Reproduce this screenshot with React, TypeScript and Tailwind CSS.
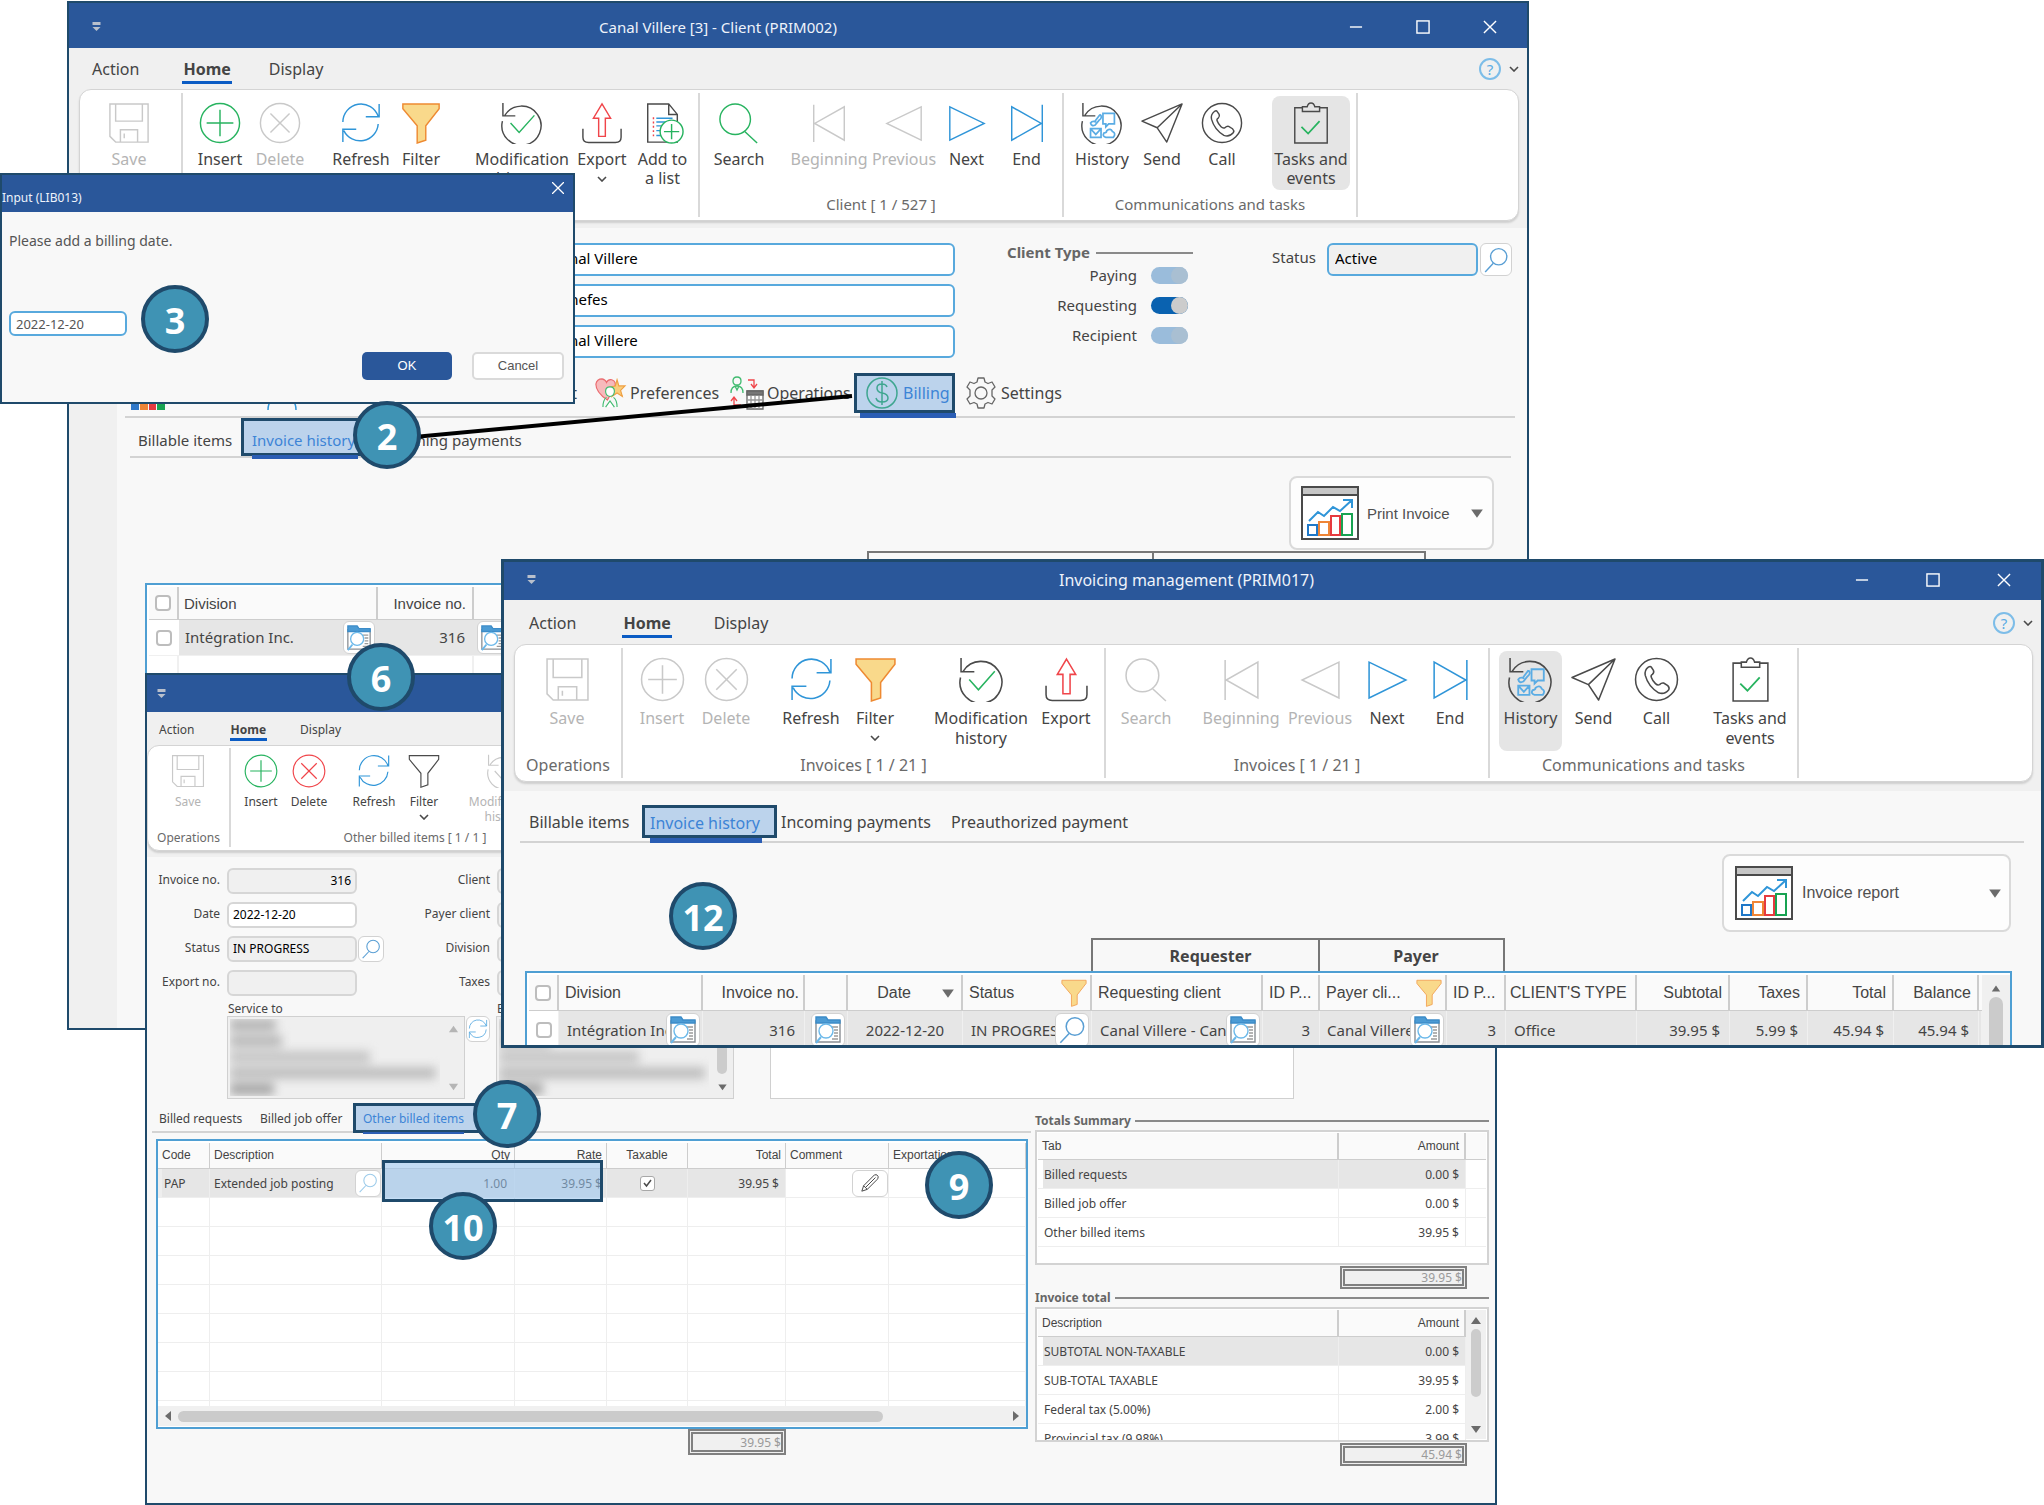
import React from "react";

type Size = "sm" | "md" | "lg";

const GREY = "#c9c9c9";
const INK = "#4a4a4a";
const GREEN = "#27b35f";
const BLUE = "#2f95d8";
const RED = "#f0454a";

/* ---------- icons ---------- */

function Svg({ children, className, color = INK, box = "0 0 44 44", weight = 1.5 }: { children: React.ReactNode; className?: string; color?: string; box?: string; weight?: number }) {
  return (
    <svg viewBox={box} className={className} fill="none" stroke={color} strokeWidth={weight} aria-hidden="true">
      {children}
    </svg>
  );
}

type IconProps = { className?: string; color?: string };

const SaveIcon = ({ className, color = GREY }: IconProps) => (
  <Svg className={className} color={color}>
    <path d="M2 2H42V42H8L2 36ZM8 2V20H36V2M13 42V29H31V42M17 33V38" />
  </Svg>
);
const PlusIcon = ({ className, color = GREEN }: IconProps) => (
  <Svg className={className} color={color}>
    <circle cx="22" cy="22" r="20.5" />
    <path d="M22 8V36M8 22H36" />
  </Svg>
);
const CrossIcon = ({ className, color = GREY }: IconProps) => (
  <Svg className={className} color={color}>
    <circle cx="22" cy="22" r="20.5" />
    <path d="M12 12L32 32M32 12L12 32" />
  </Svg>
);
const RefreshIcon = ({ className, color = BLUE }: IconProps) => (
  <Svg className={className} color={color}>
    <path d="M3 21A19 19 0 0 1 40 15M41 2V15.500H27M40 23A19 19 0 0 1 4 30M3 42V28.500H17" />
  </Svg>
);
const FilterIcon = ({ className, color = "#ee8a32", fill = "#f9d98b" }: IconProps & { fill?: string }) => (
  <Svg className={className} color={color}>
    <path fill={fill} d="M3 2H41V7L27 25V40L18 43V25L3 7Z" />
  </Svg>
);
const RewindCheckIcon = ({ className, color = INK, check = GREEN }: IconProps & { check?: string }) => (
  <Svg className={className} color={color}>
    <path d="M4 14A20.500 20.500 0 1 1 1.500 20M2 1V14.500H15" />
    <path stroke={check} d="M10 22L19 32L35 14" />
  </Svg>
);
const ExportIcon = ({ className }: IconProps) => (
  <Svg className={className}>
    <path stroke={RED} d="M22 2L31 17H25.500V36H18.500V17H13Z" />
    <path d="M2 28V37Q2 42.500 8 42.500H36Q42 42.500 42 37V28" />
  </Svg>
);
const AddListIcon = ({ className }: IconProps) => (
  <Svg className={className}>
    <path d="M6 2H28L37 13V42H6ZM28 2V13H37" />
    <path stroke={BLUE} d="M15 17H32M15 21H28M15 25H24M15 30H22M15 35H22" />
    <path stroke={RED} strokeDasharray="2 2.500" d="M12 16V37" />
    <circle cx="31" cy="31" r="12" fill="#fff" stroke={GREEN} />
    <path stroke={GREEN} d="M31 23V39M23 31H39" />
  </Svg>
);
const SearchIcon = ({ className, color = GREEN }: IconProps) => (
  <Svg className={className} color={color}>
    <circle cx="18" cy="18" r="16" />
    <path d="M28 31L41 43" />
  </Svg>
);
const FirstIcon = ({ className, color = GREY }: IconProps) => (
  <Svg className={className} color={color}>
    <path d="M6 3V42M38 5V40L7 22.500Z" />
  </Svg>
);
const PrevIcon = ({ className, color = GREY }: IconProps) => (
  <Svg className={className} color={color}>
    <path d="M40 5V40L4 22.500Z" />
  </Svg>
);
const NextIcon = ({ className, color = BLUE }: IconProps) => (
  <Svg className={className} color={color}>
    <path d="M4 5V40L40 22.500Z" />
  </Svg>
);
const EndIcon = ({ className, color = BLUE }: IconProps) => (
  <Svg className={className} color={color}>
    <path d="M38 3V42M6 5V40L37 22.500Z" />
  </Svg>
);
const HistoryIcon = ({ className }: IconProps) => (
  <Svg className={className}>
    <path d="M4 14A20.500 20.500 0 1 1 1.500 20M2 1V14.500H15" />
    <g stroke="#5aace4" strokeWidth="1.800">
      <path d="M23 12H35V23H29L26 26V23H23ZM10 28H21V37H10ZM10 28L15.500 34L21 28" />
      <path d="M26 37Q22 36 24 32.500Q27 32 27 30Q31 27 33 31Q37 33 34 37ZM20 13L14 21M20 13Q23 16 19 19L15 24Q11 26 10 22Q12 19 16 21" />
    </g>
  </Svg>
);
const SendIcon = ({ className }: IconProps) => (
  <Svg className={className}>
    <path strokeLinejoin="round" d="M43 2L1 20L17 27ZM43 2L27 42L17 27Z" />
  </Svg>
);
const CallIcon = ({ className }: IconProps) => (
  <Svg className={className}>
    <circle cx="22" cy="22" r="20.500" />
    <path d="M14 10Q10 13 11 18Q14 29 24 35Q30 37 34 32Q35 30 33 28L29 25.500Q27 25 25 27Q23 28 21 26Q18 23 17 20Q16 18 18 17Q20 15 19 13L17 10Q16 8.500 14 10Z" />
  </Svg>
);
const TasksIcon = ({ className }: IconProps) => (
  <Svg className={className}>
    <path d="M13 6H5V43H39V6H31M13 5H18Q19 1 22 1Q25 1 26 5H31V10H13Z" />
    <path stroke={GREEN} strokeWidth="1.800" d="M12 26L19 33L31 20" />
  </Svg>
);
const ChartIcon = ({ className }: IconProps) => (
  <Svg className={className} box="0 0 58 54" weight={2}>
    <rect x="1" y="1" width="56" height="52" fill="#fff" />
    <rect x="1" y="1" width="56" height="8" fill="#c6c6c6" />
    <path stroke={BLUE} d="M8 35L17 26L23 30L32 21L39 25L51 14M42 14H51V22" />
    <rect x="7" y="39" width="9" height="10" stroke="#1f78c8" />
    <rect x="18" y="36" width="10" height="13" stroke="#ef8536" />
    <rect x="30" y="30" width="9" height="19" stroke="#e63a3f" />
    <rect x="41" y="28" width="10" height="21" stroke="#18a352" />
  </Svg>
);
const FolderSearchIcon = ({ className }: IconProps) => (
  <Svg className={className} box="0 0 28 28" weight={1.400}>
    <path fill="#fff" stroke="#8a8f94" d="M2 5H26V26H2Z" />
    <path fill="#4c9bd4" stroke="#3c8cc8" d="M2 1H12L14 4H26V7H2Z" />
    <path stroke="#9a9a9a" d="M18 11H24M20 14H24M20 17H24M20 20H24M18 23H24" />
    <circle cx="12" cy="15" r="7" fill="#fff" stroke="#6cb9ea" />
    <path stroke="#6cb9ea" strokeWidth="2" d="M7 21L2 27" />
  </Svg>
);
const LensIcon = ({ className, color = "#5a9fd4" }: IconProps) => (
  <Svg className={className} box="0 0 24 24" color={color} weight={1.300}>
    <circle cx="14.500" cy="9" r="7.500" />
    <path d="M9.500 15L2 23" />
  </Svg>
);
const PencilIcon = ({ className }: IconProps) => (
  <Svg className={className} box="0 0 22 22" weight={1.100}>
    <path d="M2 20L4 14L16 2Q19 1 20 4Q20 6 19 7L8 18ZM4 14L8 18M6 16L17 5" />
  </Svg>
);
const HeartIcon = ({ className }: IconProps) => (
  <Svg className={className} box="0 0 34 34" weight={1.300}>
    <path fill="#f7b9bb" stroke="#ea6a6e" d="M14 25Q1 16 1 7Q2 1 8 1Q12 2 13 5Q15 1 19 2Q25 4 22 11Z" />
    <path fill="#f9cd7c" stroke="#efa042" d="M25 2L27 9L34 9L29 14L31 21L25 17L19 21L20 14L17 10L23 9Z" />
    <path fill="#fff" stroke="#41bb70" d="M17 10Q22 10 22 15Q22 20 17 21Q12 20 12 15Q12 10 17 10ZM9 33Q9 25 13 22M25 33Q25 25 21 22M12 33L17 26L22 33" />
  </Svg>
);
const OperationsIcon = ({ className }: IconProps) => (
  <Svg className={className} box="0 0 34 34" weight={1.300}>
    <path stroke="#41bb70" d="M7 1Q11 1 11 5Q11 9 7 9Q3 9 3 5Q3 1 7 1ZM1 17Q1 10 7 10Q13 10 13 17M5 10L7 14L9 10" />
    <path stroke={RED} d="M18 4H24V11M21 8L24 12L27 8M4 22V29H11M1 25L4 21L7 25" />
    <path fill="#fff" stroke="#666" d="M17 15H33V33H17Z" />
    <path fill="#777" stroke="#666" d="M17 15H33V19H17Z" />
    <path stroke="#999" d="M17 24H33M17 28H33M21 20V33M25 20V33M29 20V33" />
  </Svg>
);
const DollarIcon = ({ className }: IconProps) => (
  <Svg className={className} box="0 0 32 32" color="#3fa690" weight={1.500}>
    <circle cx="16" cy="16" r="15" />
    <path d="M16 4V28M21 10Q20 7 16 7Q11 7 11 11Q11 15 16 16Q22 17 22 21Q22 25 16 25Q11 25 10 21" />
  </Svg>
);
const GearIcon = ({ className }: IconProps) => (
  <Svg className={className} box="0 0 32 32" color="#666" weight={1.300}>
    <path strokeLinejoin="round" d="M13 1H19L20 5L23 6.500L27 5L30 10L27 13V19L30 22L27 27L23 25.500L20 27L19 31H13L12 27L9 25.500L5 27L2 22L5 19V13L2 10L5 5L9 6.500L12 5Z" />
    <circle cx="16" cy="16" r="6" />
  </Svg>
);
const Tri = ({ dir, className = "size-3", color = "#6b6b6b" }: { dir: "up" | "down" | "left" | "right"; className?: string; color?: string }) => {
  const d = { up: "M1 10H11L6 3Z", down: "M1 3H11L6 10Z", left: "M9 1V11L3 6Z", right: "M3 1V11L9 6Z" }[dir];
  return (
    <svg viewBox="0 0 12 12" className={className} aria-hidden="true">
      <path d={d} fill={color} />
    </svg>
  );
};
const Chevron = ({ className = "w-[10px] h-[6px]" }: { className?: string }) => (
  <Svg className={className} box="0 0 10 6" weight={1.600}>
    <path d="M1 1L5 5L9 1" />
  </Svg>
);

/* ---------- window chrome ---------- */

function TitleBar({ title, className, titleClass = "", button }: { title: string; className: string; titleClass?: string; button?: string }) {
  return (
    <header className={"relative flex shrink-0 items-center justify-between bg-[#2a579a] text-[#eef3fa] " + className}>
      <svg viewBox="0 0 8 10" className="h-[10px] w-[9px]" aria-hidden="true">
        <path d="M0 0H8V3H0Z" fill="#b9c0cc" />
        <path d="M0 5H8L4 9Z" fill="#b9c0cc" />
      </svg>
      {title && <h1 className={"absolute inset-x-0 text-center " + titleClass}>{title}</h1>}
      {button && (
        <div className="relative flex items-center">
          <button aria-label="Minimize" className={"flex justify-center " + button}>
            <Svg className="size-[14px]" box="0 0 15 15" color="#fff"><path d="M1 7.500H14" /></Svg>
          </button>
          <button aria-label="Maximize" className={"flex justify-center " + button}>
            <Svg className="size-[14px]" box="0 0 15 15" color="#fff"><rect x="1" y="1" width="13" height="13" /></Svg>
          </button>
          <button aria-label="Close" className={"flex justify-center " + button}>
            <Svg className="size-[14px]" box="0 0 15 15" color="#fff"><path d="M1 1L14 14M14 1L1 14" /></Svg>
          </button>
        </div>
      )}
    </header>
  );
}

function MenuBar({ className, home, display, underline, help }: { className: string; home: string; display: string; underline: string; help: boolean }) {
  return (
    <nav className={"relative flex shrink-0 items-center " + className}>
      <div className="flex">
        <button>Action</button>
        <button className={"relative font-bold " + home}>
          Home
          <span className={"absolute -inset-x-px h-[3px] bg-[#0b5cc4] " + underline} />
        </button>
        <button className={display}>Display</button>
      </div>
      {help && (
        <div className="absolute right-2 flex items-center gap-2">
          <button aria-label="Help" className="flex size-[22px] items-center justify-center rounded-full border-2 border-[#7dbde8] text-[15px] leading-none text-[#5aace4]">?</button>
          <Chevron />
        </div>
      )}
    </nav>
  );
}

type Tool = { label: React.ReactNode; icon: React.ReactNode; box: string; off?: boolean; active?: boolean; more?: boolean };

const SIZES: Record<Size, { item: string; icon: string; group: string; caption: string; more: string }> = {
  md: { item: "h-[94px] pt-[6px] gap-[6px]", icon: "size-[42px]", group: "pt-[3px] my-[3px] h-[124px]", caption: "mt-[5px] text-[15px]", more: "flex h-[19px] items-center justify-center" },
  lg: { item: "h-[100px] pt-[6px] gap-[6px]", icon: "size-[45px]", group: "pt-[3px] my-[3px] h-[130px]", caption: "mt-1", more: "flex h-5 items-center justify-center" },
  sm: { item: "h-[78px] pt-1 gap-[6px]", icon: "size-[34px]", group: "pt-[2px] my-[2px] h-[99px]", caption: "mt-[2px]", more: "flex h-[15px] items-center justify-center" },
};

function Group({ size, caption, tools, className, inset }: { size: Size; caption: string; tools: Tool[]; className: string; inset: string }) {
  const s = SIZES[size];
  return (
    <section className={"shrink-0 border-r-2 border-[#d9d9d9] " + s.group + " " + className}>
      <div className={"flex " + inset}>
        {tools.map((t, i) => (
          <button key={i} disabled={t.off} className={"flex shrink-0 flex-col items-center rounded-lg " + s.item + " " + t.box + (t.off ? " text-[#b4b4b4]" : "") + (t.active ? " bg-[#e5e5e5]" : "")}>
            <span className={"block " + s.icon}>{t.icon}</span>
            <span className="text-center whitespace-nowrap">
              {t.label}
              {t.more && <span className={s.more}><Chevron /></span>}
            </span>
          </button>
        ))}
      </div>
      <p className={"text-center whitespace-nowrap text-[#6a6a6a] " + s.caption}>{caption}</p>
    </section>
  );
}

const full = "size-full";
const modification = <>Modification<br />history</>;
const tasks = <>Tasks and<br />events</>;

/* ---------- small controls ---------- */

function IconButton({ label, className, children }: { label: string; className: string; children: React.ReactNode }) {
  return (
    <button aria-label={label} className={"flex shrink-0 items-center justify-center rounded-md border border-[#d2d2d2] bg-white " + className}>
      {children}
    </button>
  );
}

function Toggle({ label, strong, defaultChecked }: { label: string; strong?: boolean; defaultChecked?: boolean }) {
  return (
    <label className="flex h-[30px] items-center justify-end gap-[14px]">
      {label}
      <span className={"relative flex h-[17px] w-[37px] justify-end rounded-full " + (strong ? "bg-[#0a62b0]" : "bg-[#9abcdb]")}>
        <input type="checkbox" defaultChecked={defaultChecked} className="absolute inset-0 appearance-none" />
        <span className={"size-[17px] rounded-full " + (strong ? "bg-[#cccccc]" : "bg-[#a9bfd2]")} />
      </span>
    </label>
  );
}

function CheckBox({ label }: { label: string }) {
  return <input type="checkbox" aria-label={label} className="mx-auto block size-[16px] appearance-none rounded-[4px] border-2 border-[#bdbdbd] bg-white" />;
}

function Badge({ n, className }: { n: number; className: string }) {
  return (
    <span className={"absolute flex size-[68px] items-center justify-center rounded-full border-4 border-[#1f4a6b] bg-[#3f93b4] pt-1 font-['Open_Sans',sans-serif] text-[36px] leading-none font-bold text-white " + className}>
      {n}
    </span>
  );
}

function ReportButton({ label, className }: { label: string; className: string }) {
  return (
    <button className={"flex items-center rounded-lg border-2 border-[#dadada] bg-[#fdfdfd] font-['Liberation_Sans',sans-serif] text-[#505050] " + className}>
      <ChartIcon className="h-[54px] w-[58px]" />
      <span className="flex-1 text-left whitespace-nowrap">{label}</span>
      <Tri dir="down" className="size-[14px]" />
    </button>
  );
}

/* ---------- client window ---------- */

function ClientWindow() {
  const field = "h-[33px] w-[415px] rounded-md border-2 border-[#58a9dd] bg-white px-[9px] pb-1 text-[15px] text-black";
  return (
    <section className="absolute top-px left-[67px] flex h-[1029px] w-[1462px] flex-col overflow-hidden border-2 border-[#1f4a6b] bg-[#f8f8f8] text-[16px] leading-[19px] text-[#444]">
      <TitleBar title="Canal Villere [3] - Client (PRIM002)" button="w-[67px]" titleClass="pr-[160px] text-[15px]" className="h-[45px] pt-[3px] pr-1 pl-[23px]" />
      <div className="bg-[#f0f0f0] pb-[7px]">
        <MenuBar className="h-[41px] pt-px pl-[23px]" home="ml-11" display="ml-[38px]" underline="-bottom-[5px]" help />
        <div className="mr-2 ml-[10px] flex h-[132px] rounded-xl border border-[#d4d4d4] bg-white shadow-[0_2px_2px_#cfcfcf]">
          <Group size="md" caption="Operations" className="w-[103px]" inset="pl-[19px]" tools={[{ label: "Save", icon: <SaveIcon className={full} />, box: "w-[60px]", off: true }]} />
          <Group
            size="md"
            caption=""
            className="w-[517px]"
            inset="pl-[7px]"
            tools={[
              { label: "Insert", icon: <PlusIcon className={full} />, box: "w-[60px]" },
              { label: "Delete", icon: <CrossIcon className={full} />, box: "w-[60px]", off: true },
              { label: "Refresh", icon: <RefreshIcon className={full} />, box: "ml-[21px] w-[60px]" },
              { label: "Filter", icon: <FilterIcon className={full} />, box: "w-[60px]" },
              { label: modification, icon: <RewindCheckIcon className={full} />, box: "ml-[21px] w-[100px]" },
              { label: "Export", icon: <ExportIcon className={full} />, box: "w-[60px]", more: true },
              { label: <>Add to<br />a list</>, icon: <AddListIcon className={full} />, box: "w-[61px]" },
            ]}
          />
          <Group
            size="md"
            caption="Client [ 1 / 527 ]"
            className="w-[364px]"
            inset="pl-[9px]"
            tools={[
              { label: "Search", icon: <SearchIcon className={full} />, box: "w-[60px]" },
              { label: "Beginning", icon: <FirstIcon className={full} />, box: "ml-5 w-[80px]", off: true },
              { label: "Previous", icon: <PrevIcon className={full} />, box: "w-[70px]", off: true },
              { label: "Next", icon: <NextIcon className={full} />, box: "w-[55px]" },
              { label: "End", icon: <EndIcon className={full} />, box: "w-[65px]" },
            ]}
          />
          <Group
            size="md"
            caption="Communications and tasks"
            className="w-[294px]"
            inset="pl-[8px]"
            tools={[
              { label: "History", icon: <HistoryIcon className={full} />, box: "w-[60px]" },
              { label: "Send", icon: <SendIcon className={full} />, box: "w-[60px]" },
              { label: "Call", icon: <CallIcon className={full} />, box: "w-[60px]" },
              { label: tasks, icon: <TasksIcon className={full} />, box: "ml-5 w-[78px]", active: true },
            ]}
          />
        </div>
      </div>
      <div className="flex min-h-0 flex-1">
        <div className="w-12 shrink-0 bg-[#f0f0f0]" />
        <div className="flex min-w-0 flex-1 flex-col">
          <div className="flex h-[144px] shrink-0 pt-[15px] pl-[423px] text-[15px]">
            <div className="flex flex-col gap-2">
              <input aria-label="Name" className={field} defaultValue="Canal Villere" />
              <input aria-label="Short name" className={field} defaultValue="Benefes" />
              <input aria-label="Legal name" className={field} defaultValue="Canal Villere" />
            </div>
            <fieldset className="ml-[52px] w-[186px]">
              <legend className="flex w-[186px] items-center gap-[6px] font-bold whitespace-nowrap text-[#666]">
                Client Type <span className="h-[2px] flex-1 bg-[#8a8a8a]" />
              </legend>
              <div className="-mt-[2px] w-[181px]">
                <Toggle label="Paying" />
                <Toggle label="Requesting" strong defaultChecked />
                <Toggle label="Recipient" />
              </div>
            </fieldset>
            <div className="ml-[79px] flex h-[33px]">
              <label className="flex items-center gap-[11px]">
                <span className="pb-1">Status</span>
                <input className="h-[33px] w-[151px] rounded-md border-2 border-[#58a9dd] bg-[#f0f0f0] px-[6px] pb-1 text-black" defaultValue="Active" />
              </label>
              <IconButton label="Find status" className="ml-[2px] h-[33px] w-8">
                <LensIcon className="size-[26px]" />
              </IconButton>
            </div>
          </div>
          <nav className="mr-3 ml-2 flex h-[46px] shrink-0 border-b-2 border-[#d3d3d3] pb-[2px]">
            <button className="flex w-[136px] items-end pb-1 pl-[6px]">
              <svg viewBox="0 0 34 30" className="h-[30px] w-[34px]" aria-hidden="true">
                <path d="M0 20H8V30H0Z" fill="#2f78c8" />
                <path d="M9 14H17V30H9Z" fill="#ef8536" />
                <path d="M18 9H25V30H18Z" fill="#e63a3f" />
                <path d="M26 4H34V30H26Z" fill="#18a352" />
              </svg>
            </button>
            <button className="flex w-[100px] items-end pb-1 pl-[6px]">
              <Svg className="size-[30px]" box="0 0 30 30" color={BLUE}><circle cx="15" cy="8" r="7" /><path d="M1 30Q1 17 15 17Q29 17 29 30" /></Svg>
            </button>
            <button className="flex w-[216px] items-center justify-end text-right">Contact</button>
            <button className="ml-4 flex w-[137px] items-center gap-[3px]">
              <HeartIcon className="h-[30px] w-[34px]" />
              Preferences
            </button>
            <button className="flex w-[124px] items-center gap-[3px]">
              <OperationsIcon className="size-[34px]" />
              Operations
            </button>
            <button className="relative mt-px flex h-10 w-[101px] items-center gap-[5px] border-[3px] border-[#1f4a6b] bg-[#bcd3ec] pl-[9px] text-[#3c84d6]">
              <DollarIcon className="size-8" />
              Billing
              <span className="absolute -right-1 -bottom-2 left-[3px] h-[5px] bg-[#2a5db4]" />
            </button>
            <button className="ml-[10px] flex items-center gap-1">
              <GearIcon className="size-8" />
              Settings
            </button>
          </nav>
          <nav className="mr-4 ml-[13px] flex h-10 shrink-0 border-b-2 border-[#d3d3d3] text-[15px]">
            <button className="ml-2 w-[103px] pt-[6px] text-left">Billable items</button>
            <button className="relative flex h-[38px] w-[124px] items-center border-[3px] border-[#1f4a6b] bg-[#bcd3ec] pt-[6px] pl-2 whitespace-nowrap text-[#3c84d6]">
              Invoice history
              <span className="absolute -bottom-[6px] left-2 h-[4px] w-[106px] bg-[#2a5db4]" />
            </button>
            <button className="ml-4 pt-[6px]">Incoming payments</button>
          </nav>
          <div className="mt-[18px] mr-[33px] flex shrink-0 justify-end">
            <ReportButton label="Print Invoice" className="h-[74px] w-[205px] gap-2 pr-2 pl-[10px] text-[15px]" />
          </div>
          <div className="mt-px ml-[750px] flex h-8 w-[559px] shrink-0 border-2 border-[#777]">
            <span className="w-[285px] border-r-2 border-[#777]" />
          </div>
          <div className="ml-7 h-[300px] w-[1370px] shrink-0 border-2 border-[#4f9fd3] bg-white pt-[2px] pl-[2px]">
            <table className="w-full table-fixed border-separate border-spacing-0">
              <colgroup>
                <col className="w-[30px]" />
                <col className="w-[199px]" />
                <col className="w-[96px]" />
                <col className="w-[40px]" />
                <col />
              </colgroup>
              <thead className="font-['Liberation_Sans',sans-serif] text-[15px]">
                <tr className="h-[33px] bg-[#fafafa] text-left *:border-r-2 *:border-b *:border-[#cdcdcd] *:font-normal">
                  <th><CheckBox label="Select all" /></th>
                  <th className="pl-[5px]">Division</th>
                  <th className="pr-[6px] text-right">Invoice no.</th>
                  <th />
                  <th />
                </tr>
              </thead>
              <tbody className="text-[15px]">
                <tr className="h-[35px] bg-[#e6e6e6]">
                  <td className="bg-white"><CheckBox label="Select Intégration Inc." /></td>
                  <td className="pl-[6px]">
                    <div className="flex items-center justify-between">
                      Intégration Inc.
                      <IconButton label="Open division" className="mr-[3px] h-[33px] w-8"><FolderSearchIcon className="size-[26px]" /></IconButton>
                    </div>
                  </td>
                  <td className="pr-[9px] text-right">316</td>
                  <td className="pl-[3px]"><IconButton label="Open invoice" className="h-[33px] w-8"><FolderSearchIcon className="size-[26px]" /></IconButton></td>
                  <td />
                </tr>
                <tr className="h-9 *:border-t *:border-r-2 *:border-[#f0f0f0]">
                  <td /><td /><td /><td /><td />
                </tr>
              </tbody>
            </table>
          </div>
        </div>
      </div>
    </section>
  );
}

/* ---------- invoice window ---------- */

function FieldRow({ label, value, grey, right, labelClass = "w-[73px]", children }: { label: string; value?: string; grey?: boolean; right?: boolean; labelClass?: string; children?: React.ReactNode }) {
  return (
    <div className="flex h-[26px] items-center">
      <label className="flex items-center gap-[7px]">
        <span className={"pb-[3px] text-right whitespace-nowrap " + labelClass}>{label}</span>
        <input defaultValue={value} className={"h-[26px] w-[130px] rounded-md border-2 border-[#d6d6d6] px-1 pb-[2px] text-[12px] text-black " + (grey ? "bg-[#f0f0f0] " : "bg-white ") + (right ? "text-right" : "")} />
      </label>
      {children}
    </div>
  );
}

function BlurredList({ dim }: { dim?: boolean }) {
  return (
    <div className="flex h-[83px] w-[238px] shrink-0 justify-between border border-[#d0d0d0] bg-[#efefef] p-[2px]">
      <div className="w-[210px] overflow-hidden">
        <div className="flex flex-col gap-1 blur-[5px]">
          <span className="h-3 w-[46px] bg-[#b5b5b5]" />
          <span className="h-3 w-[52px] bg-[#bababa]" />
          <span className="h-3 w-[140px] bg-[#c6c6c6]" />
          <span className="h-3 w-[206px] bg-[#bfbfbf]" />
          <span className="h-3 w-[44px] bg-[#a8a8a8]" />
        </div>
      </div>
      <div className="flex w-[18px] flex-col items-center justify-between py-1">
        <Tri dir="up" className="size-[11px]" color={dim ? "#b5b5b5" : "#6b6b6b"} />
        {!dim && <span className="mt-auto mb-2 h-[45px] w-[10px] rounded-full bg-[#cccccc]" />}
        <Tri dir="down" className="size-[11px]" color={dim ? "#b5b5b5" : "#6b6b6b"} />
      </div>
    </div>
  );
}

function SumBox({ value, label, className }: { value: string; label: string; className: string }) {
  return (
    <output aria-label={label} className={"flex items-center justify-end border-[5px] border-double border-[#808080] bg-[#f0f0f0] text-[12px] leading-[13px] text-[#9a9a9a] " + className}>
      {value}
    </output>
  );
}

function SummaryTable({ title, first, rows, total, scroll }: { title: string; first: string; rows: [string, string][]; total: string; scroll?: boolean }) {
  return (
    <section>
      <h2 className="flex h-[17px] items-center gap-1 text-[12px] font-bold whitespace-nowrap text-[#666]">
        {title}
        <span className="h-[2px] flex-1 bg-[#8a8a8a]" />
      </h2>
      <div className="mt-px flex h-[135px] overflow-hidden border-2 border-[#d3d3d3] bg-white p-px">
        <table className="h-fit w-full table-fixed border-separate border-spacing-0 text-[12px]">
          <colgroup>
            <col className="w-[5px]" />
            <col />
            <col className="w-[127px]" />
            {!scroll && <col className="w-5" />}
          </colgroup>
          <thead className="font-['Liberation_Sans',sans-serif] text-[12px]">
            <tr className="h-[27px] bg-[#fafafa] *:border-b *:border-[#cdcdcd] *:font-normal">
              <th colSpan={2} className="border-r-2 pl-1 text-left">{first}</th>
              <th className="border-r-2 pr-[5px] text-right">Amount</th>
              {!scroll && <th />}
            </tr>
          </thead>
          <tbody>
            {rows.map(([name, amount], i) => (
              <tr key={name} className={"h-[29px] *:border-b *:border-[#eeeeee] " + (i === 0 ? "bg-[#e6e6e6]" : "")}>
                <td className="bg-white" />
                <td className="border-r pl-px">{name}</td>
                <td className="border-r pr-[6px] text-right">{amount}</td>
                {!scroll && <td className="bg-white" />}
              </tr>
            ))}
          </tbody>
        </table>
        {scroll && (
          <div className="flex w-5 shrink-0 flex-col items-center bg-[#f0f0f0] py-1">
            <Tri dir="up" />
            <span className="mt-[3px] h-[68px] w-[10px] rounded-full bg-[#cccccc]" />
            <Tri dir="down" className="mt-auto size-3" />
          </div>
        )}
      </div>
      <div className="flex justify-end pr-[22px]">
        <SumBox label={title} value={total} className="mt-px h-[23px] w-[127px]" />
      </div>
    </section>
  );
}

function InvoiceWindow() {
  return (
    <section className="absolute top-[673px] left-[145px] flex h-[832px] w-[1352px] flex-col overflow-hidden border-2 border-[#1f4a6b] bg-[#f8f8f8] text-[12px] leading-[15px] text-[#444]">
      <TitleBar title="" className="h-[37px] pl-[10px]" />
      <div className="bg-[#f0f0f0] pb-[6px]">
        <MenuBar className="h-[33px] pt-px pl-3" home="ml-[36px]" display="ml-[34px]" underline="-bottom-1" help={false} />
        <div className="flex h-[106px] overflow-hidden rounded-xl border border-[#d4d4d4] bg-white shadow-[0_2px_2px_#cfcfcf]">
          <Group size="sm" caption="Operations" className="w-[83px]" inset="pl-[15px]" tools={[{ label: "Save", icon: <SaveIcon className={full} />, box: "w-[50px]", off: true }]} />
          <Group
            size="sm"
            caption="Other billed items [ 1 / 1 ]"
            className="w-[370px]"
            inset="pl-[6px]"
            tools={[
              { label: "Insert", icon: <PlusIcon className={full} />, box: "w-[48px]" },
              { label: "Delete", icon: <CrossIcon className={full} color={RED} />, box: "w-[48px]" },
              { label: "Refresh", icon: <RefreshIcon className={full} />, box: "ml-4 w-[50px]" },
              { label: "Filter", icon: <FilterIcon className={full} color={INK} fill="#fff" />, box: "w-[50px]", more: true },
              { label: modification, icon: <RewindCheckIcon className={full} color={GREY} check={GREY} />, box: "ml-3 w-[86px]", off: true },
            ]}
          />
        </div>
      </div>
      <div className="flex flex-col pt-[11px]">
        <div className="flex">
          <div className="flex w-[238px] flex-col gap-2">
            <FieldRow label="Invoice no." value="316" grey right />
            <FieldRow label="Date" value="2022-12-20" />
            <FieldRow label="Status" value="IN PROGRESS" grey>
              <IconButton label="Find status" className="ml-px size-[26px]"><LensIcon className="size-5" /></IconButton>
            </FieldRow>
            <FieldRow label="Export no." grey />
          </div>
          <div className="flex flex-col gap-2">
            {["Client", "Payer client", "Division", "Taxes"].map((l) => (
              <FieldRow key={l} label={l} grey labelClass="w-[105px]" />
            ))}
          </div>
        </div>
        <div className="flex h-5 items-end pl-[81px]">
          <span className="w-[269px]">Service to</span>
          <span>Bill to</span>
        </div>
        <div className="flex pl-20">
          <BlurredList dim />
          <IconButton label="Reload list" className="mr-[6px] ml-px h-[26px] w-6"><RefreshIcon className="size-5" /></IconButton>
          <BlurredList />
          <textarea aria-label="Notes" className="ml-9 h-[83px] w-[524px] resize-none border border-[#d0d0d0] bg-white" />
        </div>
      </div>
      <div className="flex pr-[6px]">
        <div className="w-[884px] shrink-0 pt-1 pl-[5px]">
          <nav className="relative flex h-[30px] border-b-2 border-[#d3d3d3]">
            <button className="ml-[7px] w-[101px] pt-[2px] text-left">Billed requests</button>
            <button className="w-[93px] pt-[2px] text-left">Billed job offer</button>
            <button className="relative -mb-[2px] w-[136px] border-[3px] border-[#1f4a6b] bg-[#bcd3ec] pl-[7px] text-left text-[#3c84d6]">
              <span className="border-b-2 border-[#2a5db4] pb-[5px]">Other billed items</span>
            </button>
          </nav>
          <div className="mt-[6px] ml-1 h-[290px] w-[872px] overflow-hidden border-2 border-[#4f9fd3] bg-white">
            <div className="h-[265px] overflow-hidden pt-[2px]">
              <table className="w-full table-fixed border-separate border-spacing-0">
                <colgroup>
                  <col className="w-[52px]" />
                  <col className="w-[172px]" />
                  <col className="w-[133px]" />
                  <col className="w-[92px]" />
                  <col className="w-[81px]" />
                  <col className="w-[98px]" />
                  <col className="w-[103px]" />
                  <col />
                </colgroup>
                <thead className="font-['Liberation_Sans',sans-serif] text-[12px]">
                  <tr className="h-[26px] bg-[#fafafa] text-left *:border-r *:border-b *:border-[#cdcdcd] *:px-1 *:font-normal">
                    <th>Code</th>
                    <th>Description</th>
                    <th className="text-right">Qty</th>
                    <th className="text-right">Rate</th>
                    <th className="text-center">Taxable</th>
                    <th className="text-right">Total</th>
                    <th>Comment</th>
                    <th>Exportation</th>
                  </tr>
                </thead>
                <tbody className="text-[12px]">
                  <tr className="h-[29px] bg-[#e6e6e6] *:border-r *:border-b *:border-[#eeeeee]">
                    <td className="border-l-4 border-l-white pl-[2px]">PAP</td>
                    <td className="pl-1">
                      <div className="flex items-center justify-between whitespace-nowrap">
                        Extended job posting
                        <IconButton label="Find item" className="h-[27px] w-[26px]"><LensIcon className="size-5" color="#9ccbea" /></IconButton>
                      </div>
                    </td>
                    <td className="pr-[7px] text-right">1.00</td>
                    <td className="pr-1 text-right">39.95 $</td>
                    <td>
                      <span className="relative mx-auto block size-[15px]">
                        <input type="checkbox" aria-label="Taxable" defaultChecked className="block size-[15px] appearance-none rounded-[3px] border border-[#a8a8a8] bg-white" />
                        <Svg className="pointer-events-none absolute inset-[3px] size-[9px]" box="0 0 9 9"><path d="M1 4L3.500 7L8 1" /></Svg>
                      </span>
                    </td>
                    <td className="pr-[6px] text-right">39.95 $</td>
                    <td className="bg-white">
                      <IconButton label="Edit comment" className="ml-auto h-[27px] w-9"><PencilIcon className="size-5" /></IconButton>
                    </td>
                    <td className="bg-white" />
                  </tr>
                  {Array.from({ length: 8 }, (_, r) => (
                    <tr key={r} className="h-[29px] *:border-r *:border-b *:border-[#eeeeee]">
                      <td /><td /><td /><td /><td /><td /><td /><td />
                    </tr>
                  ))}
                </tbody>
              </table>
            </div>
            <div className="flex h-5 items-center gap-1 bg-[#f0f0f0] px-1">
              <Tri dir="left" />
              <span className="h-[11px] w-[705px] rounded-full bg-[#cbcbcb]" />
              <Tri dir="right" className="ml-auto size-3" />
            </div>
          </div>
          <div className="pl-[536px]">
            <SumBox label="Total billed" value="39.95 $" className="h-[26px] w-[98px]" />
          </div>
        </div>
        <div className="flex min-w-0 flex-1 flex-col pt-[13px] pl-1">
          <SummaryTable title="Totals Summary" first="Tab" total="39.95 $" rows={[["Billed requests", "0.00 $"], ["Billed job offer", "0.00 $"], ["Other billed items", "39.95 $"]]} />
          <SummaryTable
            title="Invoice total"
            first="Description"
            total="45.94 $"
            scroll
            rows={[["SUBTOTAL NON-TAXABLE", "0.00 $"], ["SUB-TOTAL TAXABLE", "39.95 $"], ["Federal tax (5.00%)", "2.00 $"], ["Provincial tax (9.98%)", "3.99 $"]]}
          />
        </div>
      </div>
    </section>
  );
}

/* ---------- invoicing management window ---------- */

function CellWithButton({ text, label, lens }: { text: string; label: string; lens?: boolean }) {
  return (
    <div className="flex items-center">
      <span className="min-w-0 flex-1 overflow-hidden whitespace-nowrap">{text}</span>
      <IconButton label={label} className="mr-[2px] h-[34px] w-[34px]">
        {lens ? <LensIcon className="size-7" /> : <FolderSearchIcon className="size-7" />}
      </IconButton>
    </div>
  );
}

function InvoicingWindow() {
  return (
    <section className="absolute top-[559px] left-[501px] flex h-[489px] w-[1543px] flex-col overflow-hidden border-[3px] border-[#1f4a6b] bg-[#f8f8f8] text-[16px] leading-5 text-[#444]">
      <TitleBar title="Invoicing management (PRIM017)" button="w-[71px]" titleClass="pr-[172px]" className="h-[38px] pr-[2px] pb-[2px] pl-[23px]" />
      <div className="bg-[#f0f0f0] pb-[9px]">
        <MenuBar className="h-11 pt-[2px] pl-[25px]" home="ml-[47px]" display="ml-[43px]" underline="-bottom-[5px]" help />
        <div className="mr-2 ml-[10px] flex h-[138px] rounded-xl border border-[#d4d4d4] bg-white shadow-[0_2px_2px_#cfcfcf]">
          <Group size="lg" caption="Operations" className="w-[108px]" inset="pl-[20px]" tools={[{ label: "Save", icon: <SaveIcon className={full} />, box: "w-[64px]", off: true }]} />
          <Group
            size="lg"
            caption="Invoices [ 1 / 21 ]"
            className="w-[483px]"
            inset="pl-[7px]"
            tools={[
              { label: "Insert", icon: <PlusIcon className={full} color={GREY} />, box: "w-[64px]", off: true },
              { label: "Delete", icon: <CrossIcon className={full} />, box: "w-[64px]", off: true },
              { label: "Refresh", icon: <RefreshIcon className={full} />, box: "ml-[21px] w-[64px]" },
              { label: "Filter", icon: <FilterIcon className={full} />, box: "w-[64px]", more: true },
              { label: modification, icon: <RewindCheckIcon className={full} />, box: "ml-[21px] w-[106px]" },
              { label: "Export", icon: <ExportIcon className={full} />, box: "w-[64px]" },
            ]}
          />
          <Group
            size="lg"
            caption="Invoices [ 1 / 21 ]"
            className="w-[384px]"
            inset="pl-[8px]"
            tools={[
              { label: "Search", icon: <SearchIcon className={full} color={GREY} />, box: "w-[64px]", off: true },
              { label: "Beginning", icon: <FirstIcon className={full} />, box: "ml-5 w-[86px]", off: true },
              { label: "Previous", icon: <PrevIcon className={full} />, box: "w-[72px]", off: true },
              { label: "Next", icon: <NextIcon className={full} />, box: "w-[62px]" },
              { label: "End", icon: <EndIcon className={full} />, box: "w-[64px]" },
            ]}
          />
          <Group
            size="lg"
            caption="Communications and tasks"
            className="w-[309px]"
            inset="pl-[9px]"
            tools={[
              { label: "History", icon: <HistoryIcon className={full} />, box: "w-[63px]", active: true },
              { label: "Send", icon: <SendIcon className={full} />, box: "w-[63px]" },
              { label: "Call", icon: <CallIcon className={full} />, box: "w-[63px]" },
              { label: tasks, icon: <TasksIcon className={full} />, box: "ml-5 w-[84px]" },
            ]}
          />
        </div>
      </div>
      <nav className="mt-[14px] mr-[17px] ml-4 flex h-[38px] shrink-0 border-b-2 border-[#d3d3d3]">
        <button className="mb-[2px] ml-[9px] w-[113px] text-left">Billable items</button>
        <button className="relative h-[33px] w-[135px] border-[3px] border-[#1f4a6b] bg-[#bcd3ec] pt-[3px] pl-[5px] text-left whitespace-nowrap text-[#3c84d6]">
          Invoice history
          <span className="absolute -bottom-2 left-[5px] h-[5px] w-[112px] bg-[#2a5db4]" />
        </button>
        <button className="mb-[2px] ml-1 w-[170px] text-left">Incoming payments</button>
        <button className="mb-[2px]">Preauthorized payment</button>
      </nav>
      <div className="mt-[11px] mr-[30px] flex justify-end">
        <ReportButton label="Invoice report" className="h-[78px] w-[289px] gap-[9px] pr-[7px] pl-[11px] text-[16px]" />
      </div>
      <div className="mt-[6px] ml-[587px] flex h-[33px] w-[414px] shrink-0 border-2 border-b-0 border-[#777] text-center font-bold">
        <span className="w-[227px] border-r-2 border-[#777] pt-[6px] pl-[10px]">Requester</span>
        <span className="flex-1 pt-[6px] pl-[9px]">Payer</span>
      </div>
      <div className="mr-[29px] ml-[21px] flex h-[100px] shrink-0 border-2 border-[#4f9fd3] bg-white pt-[2px] pl-[2px]">
        <table className="h-fit w-full table-fixed border-separate border-spacing-0">
          <colgroup>
            <col className="w-[30px]" />
            <col className="w-[144px]" />
            <col className="w-[102px]" />
            <col className="w-[43px]" />
            <col className="w-[115px]" />
            <col className="w-[129px]" />
            <col className="w-[171px]" />
            <col className="w-[57px]" />
            <col className="w-[127px]" />
            <col className="w-[59px]" />
            <col className="w-[131px]" />
            <col className="w-[93px]" />
            <col className="w-[78px]" />
            <col className="w-[86px]" />
            <col className="w-[85px]" />
            <col />
          </colgroup>
          <thead className="font-['Liberation_Sans',sans-serif] text-[16px]">
            <tr className="h-[36px] bg-[#fafafa] text-left whitespace-nowrap *:border-r-2 *:border-b *:border-[#cdcdcd] *:px-[6px] *:font-normal">
              <th className="!px-0"><CheckBox label="Select all" /></th>
              <th>Division</th>
              <th className="!pr-1 text-right">Invoice no.</th>
              <th />
              <th>
                <span className="flex items-center justify-end gap-[30px]">Date <Tri dir="down" className="size-[14px]" /></span>
              </th>
              <th className="!pr-[2px]">
                <span className="flex items-center justify-between">Status <FilterIcon className="h-[30px] w-[28px]" color="#f2a65a" /></span>
              </th>
              <th>Requesting client</th>
              <th>ID P...</th>
              <th className="!pr-[2px]">
                <span className="flex items-center justify-between">Payer cli... <FilterIcon className="h-[30px] w-[28px]" color="#f2a65a" /></span>
              </th>
              <th>ID P...</th>
              <th className="!px-1">CLIENT'S TYPE</th>
              <th className="text-right">Subtotal</th>
              <th className="text-right">Taxes</th>
              <th className="text-right">Total</th>
              <th className="text-right">Balance</th>
              <th className="!border-r-0 !px-0" />
            </tr>
          </thead>
          <tbody className="text-[15px]">
            <tr className="h-[38px] bg-[#e6e6e6] whitespace-nowrap *:border-r *:border-[#f0f0f0]">
              <td className="bg-white"><CheckBox label="Select Intégration Inc." /></td>
              <td className="pl-2"><CellWithButton text="Intégration Inc." label="Open division" /></td>
              <td className="pr-[9px] text-right">316</td>
              <td><CellWithButton text="" label="Open invoice" /></td>
              <td className="text-center">2022-12-20</td>
              <td className="pl-2"><CellWithButton text="IN PROGRESS" label="Find status" lens /></td>
              <td className="pl-2"><CellWithButton text="Canal Villere - Canal Villere" label="Open requesting client" /></td>
              <td className="pr-[9px] text-right">3</td>
              <td className="pl-[7px]"><CellWithButton text="Canal Villere" label="Open payer client" /></td>
              <td className="pr-[9px] text-right">3</td>
              <td className="pl-2">Office</td>
              <td className="pr-[9px] text-right">39.95 $</td>
              <td className="pr-[9px] text-right">5.99 $</td>
              <td className="pr-[9px] text-right">45.94 $</td>
              <td className="pr-[9px] text-right">45.94 $</td>
              <td />
            </tr>
          </tbody>
        </table>
        <div className="flex w-7 shrink-0 flex-col items-center bg-[#f0f0f0] pt-2">
          <Tri dir="up" className="size-[14px]" />
          <span className="mt-1 h-[100px] w-[14px] rounded-full bg-[#cbcbcb]" />
        </div>
      </div>
    </section>
  );
}

/* ---------- input dialog ---------- */

function InputDialog() {
  return (
    <section role="dialog" aria-label="Input (LIB013)" className="absolute top-[173px] left-0 flex h-[231px] w-[575px] flex-col overflow-hidden border-2 border-[#1f4a6b] bg-[#f8f8f8] text-[13px] text-[#555]">
      <header className="flex h-[37px] justify-between bg-[#2a579a] text-[#eef3fa]">
        <h2 className="self-end pb-[5px] text-[12px]">Input (LIB013)</h2>
        <button aria-label="Close" className="mr-[9px]">
          <Svg className="mb-3 size-3" box="0 0 12 12" color="#fff" weight={1.300}><path d="M0 0L12 12M12 0L0 12" /></Svg>
        </button>
      </header>
      <div className="flex flex-1 flex-col pt-[18px] pl-[7px]">
        <label htmlFor="billing-date" className="text-[14px]">Please add a billing date.</label>
        <input id="billing-date" defaultValue="2022-12-20" className="mt-[60px] h-[25px] w-[118px] rounded-md border-2 border-[#58a9dd] bg-white px-[5px] text-[13px]" />
        <div className="mt-4 mr-[9px] flex justify-end gap-5 font-['Liberation_Sans',sans-serif]">
          <button className="h-7 w-[90px] rounded-[5px] bg-[#2a579a] text-white">OK</button>
          <button className="h-7 w-[92px] rounded-[5px] border-2 border-[#dadada] bg-white">Cancel</button>
        </div>
      </div>
    </section>
  );
}

export default function App() {
  return (
    <main className="relative h-screen w-full overflow-hidden bg-white font-['Noto_Sans',sans-serif]">
      <ClientWindow />
      <InputDialog />
      <InvoiceWindow />
      <InvoicingWindow />
      <svg viewBox="0 0 440 48" className="absolute top-[392px] left-[414px] h-12 w-[440px]" aria-hidden="true">
        <path d="M0 45L438 4" stroke="#000" strokeWidth="4" />
      </svg>
      <span className="absolute top-[1160px] left-[382px] h-[42px] w-[221px] border-[3px] border-[#1f4a6b] bg-[#96c2ef]/55" />
      <Badge n={3} className="top-[285px] left-[141px]" />
      <Badge n={2} className="top-[401px] left-[353px]" />
      <Badge n={6} className="top-[643px] left-[347px]" />
      <Badge n={12} className="top-[882px] left-[669px]" />
      <Badge n={7} className="top-[1080px] left-[473px]" />
      <Badge n={9} className="top-[1151px] left-[925px]" />
      <Badge n={10} className="top-[1192px] left-[429px]" />
    </main>
  );
}
